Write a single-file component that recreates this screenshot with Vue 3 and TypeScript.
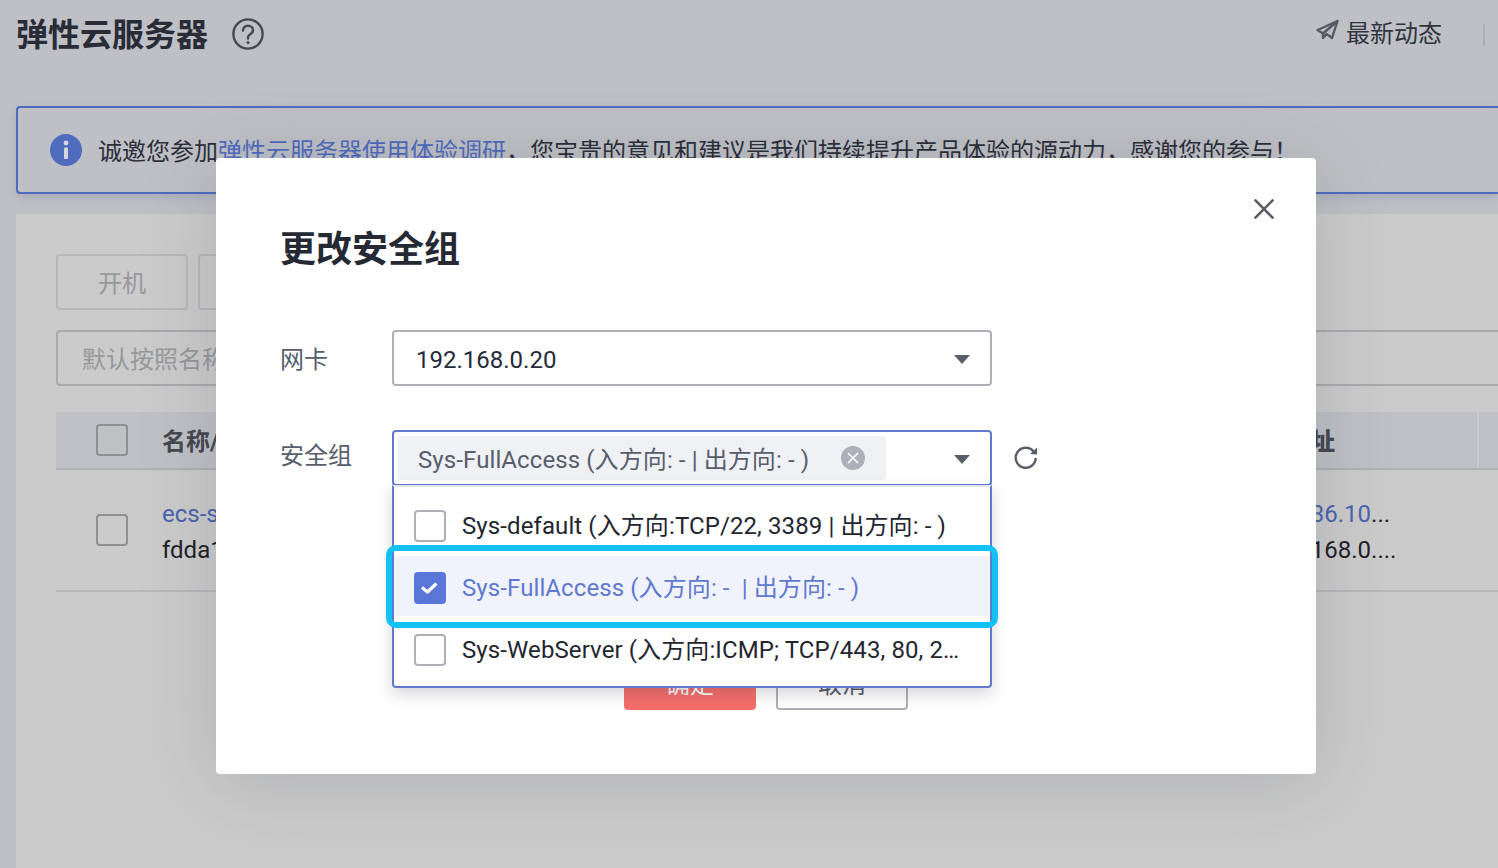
<script setup lang="ts">
interface Option {
  label: string
  checked: boolean
}

const options: Option[] = [
  { label: 'Sys-default (入方向:TCP/22, 3389 | 出方向: - )', checked: false },
  { label: 'Sys-FullAccess (入方向: -  | 出方向: - )', checked: true },
  { label: 'Sys-WebServer (入方向:ICMP; TCP/443, 80, 22, 3389 | 出方向: - )', checked: false },
]
</script>

<template>
  <div class="page">
    <header class="topbar">
      <div class="title-wrap">
        <h1 class="page-title">弹性云服务器</h1>
        <svg class="help" width="32" height="32" viewBox="0 0 32 32" fill="none" stroke="#454850" stroke-width="2.4">
          <circle cx="16" cy="16" r="14.6" />
          <path d="M11 12.5c0-3 2.300-4.800 5-4.800s5 1.800 5 4.500c0 2-1.200 3-2.800 4-1.400.9-2.200 1.600-2.200 3.300v1" stroke-linecap="round" />
          <circle cx="16" cy="24.500" r="1.500" fill="#454850" stroke="none" />
        </svg>
      </div>
      <div class="top-actions">
        <svg class="plane" width="24" height="24" viewBox="0 0 24 24" fill="none" stroke="#555965" stroke-width="2.400" stroke-linejoin="round">
          <path d="M22.500 2 2.500 11 8 14.500V19l3.500-4 5.500 4L22.500 2Z" />
          <path d="M22.500 2 8 14.500" />
        </svg>
        <span class="news">最新动态</span>
        <span class="divider"></span>
      </div>
    </header>

    <section class="notice">
      <svg class="info" width="32" height="32" viewBox="0 0 32 32">
        <circle cx="16" cy="16" r="16" fill="#4f6bbd" />
        <circle cx="16" cy="9" r="2.400" fill="#d4d7df" />
        <rect x="14" y="13.500" width="4" height="11.500" rx="1" fill="#d4d7df" />
      </svg>
      <p class="notice-text">诚邀您参加<span class="notice-link">弹性云服务器使用体验调研</span>，您宝贵的意见和建议是我们持续提升产品体验的源动力，感谢您的参与！</p>
    </section>

    <main class="panel">
      <div class="toolbar">
        <button class="ghost-btn">开机</button>
        <button class="ghost-btn">关机</button>
      </div>
      <div class="search">默认按照名称搜索</div>
      <div class="table">
        <div class="thead">
          <span class="cell-check"><i class="box"></i></span>
          <span class="cell-name">名称/ID</span>
          <span class="cell-addr"><b>IP地址</b></span>
          <span class="cell-rest"></span>
        </div>
        <div class="tbody-row">
          <span class="cell-check"><i class="box"></i></span>
          <span class="cell-name stack">
            <a>ecs-server</a>
            <span>fdda1c02</span>
          </span>
          <span class="cell-addr stack">
            <span class="addr-line"><a>121.36.10</a>...</span>
            <span class="addr-line">192.168.0....</span>
          </span>
          <span class="cell-rest"></span>
        </div>
      </div>
    </main>

    <div class="overlay">
      <div class="dialog">
        <svg class="close" width="20" height="20" viewBox="0 0 20 20" stroke="#5a5e6b" stroke-width="2.600" stroke-linecap="square">
          <path d="M1.500 1.500 18.500 18.500M18.500 1.500 1.500 18.500" />
        </svg>
        <h2 class="dialog-title">更改安全组</h2>

        <div class="form-row first">
          <label class="form-label label-top">网卡</label>
          <div class="select">
            <span class="select-value">192.168.0.20</span>
            <i class="caret"></i>
          </div>
        </div>

        <div class="form-row second">
          <label class="form-label label-bottom">安全组</label>
          <div class="select-wrap">
            <div class="select open">
              <span class="tag">
                <span class="tag-text">Sys-FullAccess (入方向: - | 出方向: - )</span>
                <svg class="tag-x" width="24" height="24" viewBox="0 0 24 24">
                  <circle cx="12" cy="12" r="12" fill="#adb0b8" />
                  <path d="M7 7l10 10M17 7 7 17" stroke="#fff" stroke-width="1.600" />
                </svg>
              </span>
              <i class="caret"></i>
            </div>
            <div class="dropdown">
              <div v-for="o in options" :key="o.label" class="option" :class="{ selected: o.checked }">
                <span class="check" :class="{ on: o.checked }">
                  <svg v-if="o.checked" width="20" height="20" viewBox="0 0 20 20" fill="none" stroke="#fff" stroke-width="3.200" stroke-linejoin="round">
                    <path d="M2 9.500 7.500 14 16.500 5.500" />
                  </svg>
                </span>
                <span class="option-text">{{ o.label }}</span>
              </div>
            </div>
            <div class="highlight"></div>
          </div>
          <svg class="refresh" width="26" height="26" viewBox="0 0 26 26" fill="none" stroke="#5a5e6b" stroke-width="2.400">
            <path d="M20.500 7.500A10 10 0 1 0 22.700 14" />
            <path d="M24 3.500v7l-7-.5Z" fill="#5a5e6b" stroke="none" />
          </svg>
        </div>

        <div class="actions">
          <button class="btn-ok">确定</button>
          <button class="btn-cancel">取消</button>
        </div>
      </div>
    </div>
  </div>
</template>

<style>
html,
body {
  margin: 0;
  overflow: hidden;
}
</style>

<style scoped>
.page {
  position: relative;
  width: 1498px;
  height: 868px;
  overflow: hidden;
  background: #bec0c5;
  font-family: Roboto, "Noto Sans CJK SC", sans-serif;
  font-size: 24px;
  color: #23262f;
}
.topbar {
  height: 106px;
  display: flex;
  align-items: flex-start;
  justify-content: space-between;
  box-sizing: border-box;
  padding: 11px 13px 0 16px;
}
.title-wrap {
  display: flex;
  align-items: center;
  gap: 24px;
  height: 46px;
}
.page-title {
  margin: 2px 0 0;
  font-size: 32px;
  line-height: 46px;
  font-weight: 700;
  color: #292c37;
}
.top-actions {
  display: flex;
  align-items: center;
  height: 40px;
}
.plane {
  margin-right: 7px;
}
.news {
  color: #30333e;
}
.divider {
  width: 2px;
  height: 22px;
  margin: 7px 0 0 41px;
  background: #acafb6;
}
.notice {
  display: flex;
  align-items: center;
  box-sizing: border-box;
  height: 88px;
  margin-left: 16px;
  padding-left: 32px;
  border: 2px solid #4f6bbd;
  border-right: 0;
  border-radius: 4px 0 0 4px;
  box-shadow: 0 4px 8px rgba(60, 70, 100, 0.14);
}
.info {
  flex: none;
}
.notice-text {
  margin: 0 0 2px 16px;
  white-space: nowrap;
  color: #2c2f3a;
}
.notice-link {
  color: #4f6bbd;
}
.panel {
  margin: 20px 0 0 16px;
  box-sizing: border-box;
  height: 654px;
  padding: 40px 0 0 40px;
  background: #cbcbcb;
}
.toolbar {
  display: flex;
  gap: 10px;
}
.ghost-btn {
  width: 132px;
  height: 56px;
  padding: 0 0 2px;
  border: 2px solid #b7b8bb;
  border-radius: 4px;
  background: transparent;
  font: inherit;
  color: #97989c;
}
.search {
  box-sizing: border-box;
  height: 56px;
  margin-top: 20px;
  padding-left: 24px;
  line-height: 56px;
  border: 2px solid #a9aaae;
  border-right: 0;
  border-radius: 4px 0 0 4px;
  color: #97989c;
}
.table {
  margin-top: 26px;
}
.thead,
.tbody-row {
  display: grid;
  box-sizing: border-box;
  grid-template-columns: 106px 1102px 213px 1fr;
  align-items: center;
}
.thead {
  height: 58px;
  background: #bfc1c6;
  border-bottom: 2px solid #adafb4;
  font-weight: 700;
  color: #45484f;
}
.thead .cell-name,
.thead .cell-addr {
  padding-bottom: 2px;
}
.tbody-row {
  height: 122px;
  border-bottom: 2px solid #b7b8bb;
  color: #1f2128;
}
.cell-check {
  display: flex;
  padding-left: 40px;
}
.box {
  display: block;
  box-sizing: border-box;
  width: 32px;
  height: 32px;
  border: 2px solid #8e8f93;
  border-radius: 4px;
}
.cell-addr {
  align-self: stretch;
  display: flex;
  align-items: center;
  white-space: nowrap;
}
.cell-rest {
  align-self: stretch;
}
.thead .cell-rest {
  border-left: 2px solid #cbcbcb;
}
.stack {
  display: flex;
  flex-direction: column;
  justify-content: center;
  align-items: flex-start;
  padding-top: 4px;
  line-height: 36px;
}
.stack a {
  color: #4a64ad;
}
.overlay {
  position: absolute;
  inset: 0;
}
.dialog {
  position: absolute;
  left: 216px;
  top: 158px;
  box-sizing: border-box;
  width: 1100px;
  height: 616px;
  padding: 64px 0 0 64px;
  border-radius: 4px;
  background: #fff;
  box-shadow: 0 8px 80px rgba(40, 44, 60, 0.16);
}
.close {
  position: absolute;
  right: 42px;
  top: 41px;
}
.dialog-title {
  margin: 0;
  font-size: 36px;
  line-height: 56px;
  font-weight: 700;
  color: #252933;
}
.form-row {
  display: flex;
  align-items: flex-start;
}
.form-row.first {
  margin-top: 52px;
}
.form-row.second {
  margin-top: 40px;
}
.form-label {
  width: 112px;
  flex: none;
  color: #575d6c;
}
.label-top {
  line-height: 60px;
}
.label-bottom {
  line-height: 52px;
}
.select-wrap {
  position: relative;
  z-index: 2;
  width: 600px;
}
.select {
  position: relative;
  display: flex;
  align-items: center;
  box-sizing: border-box;
  width: 600px;
  height: 56px;
  padding-left: 22px;
  border: 2px solid #adb0b8;
  border-radius: 4px;
}
.select.open {
  padding-left: 4px;
  border-color: #5f79cf;
}
.select-value {
  padding-top: 4px;
  color: #252b3a;
}
.caret {
  position: absolute;
  right: 20px;
  top: 23px;
  width: 0;
  height: 0;
  border-left: 8px solid transparent;
  border-right: 8px solid transparent;
  border-top: 9px solid #5a5e6b;
}
.tag {
  display: flex;
  align-items: center;
  box-sizing: border-box;
  width: 488px;
  height: 44px;
  padding-left: 20px;
  border-radius: 4px;
  background: #f0f1f5;
  color: #575d6c;
  letter-spacing: 0.1px;
}
.tag-text {
  padding-bottom: 2px;
}
.tag-x {
  margin-left: auto;
  margin-right: 21px;
}
.dropdown {
  position: absolute;
  left: 0;
  right: 0;
  top: 55px;
  box-sizing: border-box;
  height: 203px;
  padding-top: 9px;
  background: #fff;
  border: 2px solid #5f79cf;
  border-top: 2px solid #e4e5ea;
  border-radius: 0 0 4px 4px;
  box-shadow: 0 6px 16px rgba(40, 44, 60, 0.2);
}
.option {
  display: flex;
  align-items: center;
  box-sizing: border-box;
  height: 60px;
  padding: 0 30px 0 20px;
  letter-spacing: 0.1px;
}
.option.selected {
  margin-bottom: 4px;
  padding-top: 4px;
  background: #f0f3fb;
  color: #5f79cf;
}
.check {
  flex: none;
  display: flex;
  align-items: center;
  justify-content: center;
  box-sizing: border-box;
  width: 32px;
  height: 32px;
  margin-right: 16px;
  border: 2px solid #adb0b8;
  border-radius: 4px;
  background: #fff;
}
.check.on {
  border-color: #5b76d9;
  background: #5b76d9;
}
.option-text {
  overflow: hidden;
  padding-bottom: 6px;
  white-space: pre;
  text-overflow: ellipsis;
}
.highlight {
  position: absolute;
  left: -6px;
  right: -6px;
  top: 115px;
  height: 83px;
  box-sizing: border-box;
  border: 6px solid #12c2f7;
  border-radius: 10px;
  pointer-events: none;
}
.refresh {
  margin: 14px 0 0 21px;
}
.actions {
  position: absolute;
  left: 408px;
  top: 496px;
  display: flex;
  gap: 20px;
}
.btn-ok,
.btn-cancel {
  width: 132px;
  height: 56px;
  border-radius: 4px;
  font: inherit;
  padding: 0;
}
.btn-ok {
  border: 0;
  background: #f66f6a;
  color: #fff;
}
.btn-cancel {
  border: 2px solid #adb0b8;
  background: #fff;
  color: #575d6c;
}
</style>
